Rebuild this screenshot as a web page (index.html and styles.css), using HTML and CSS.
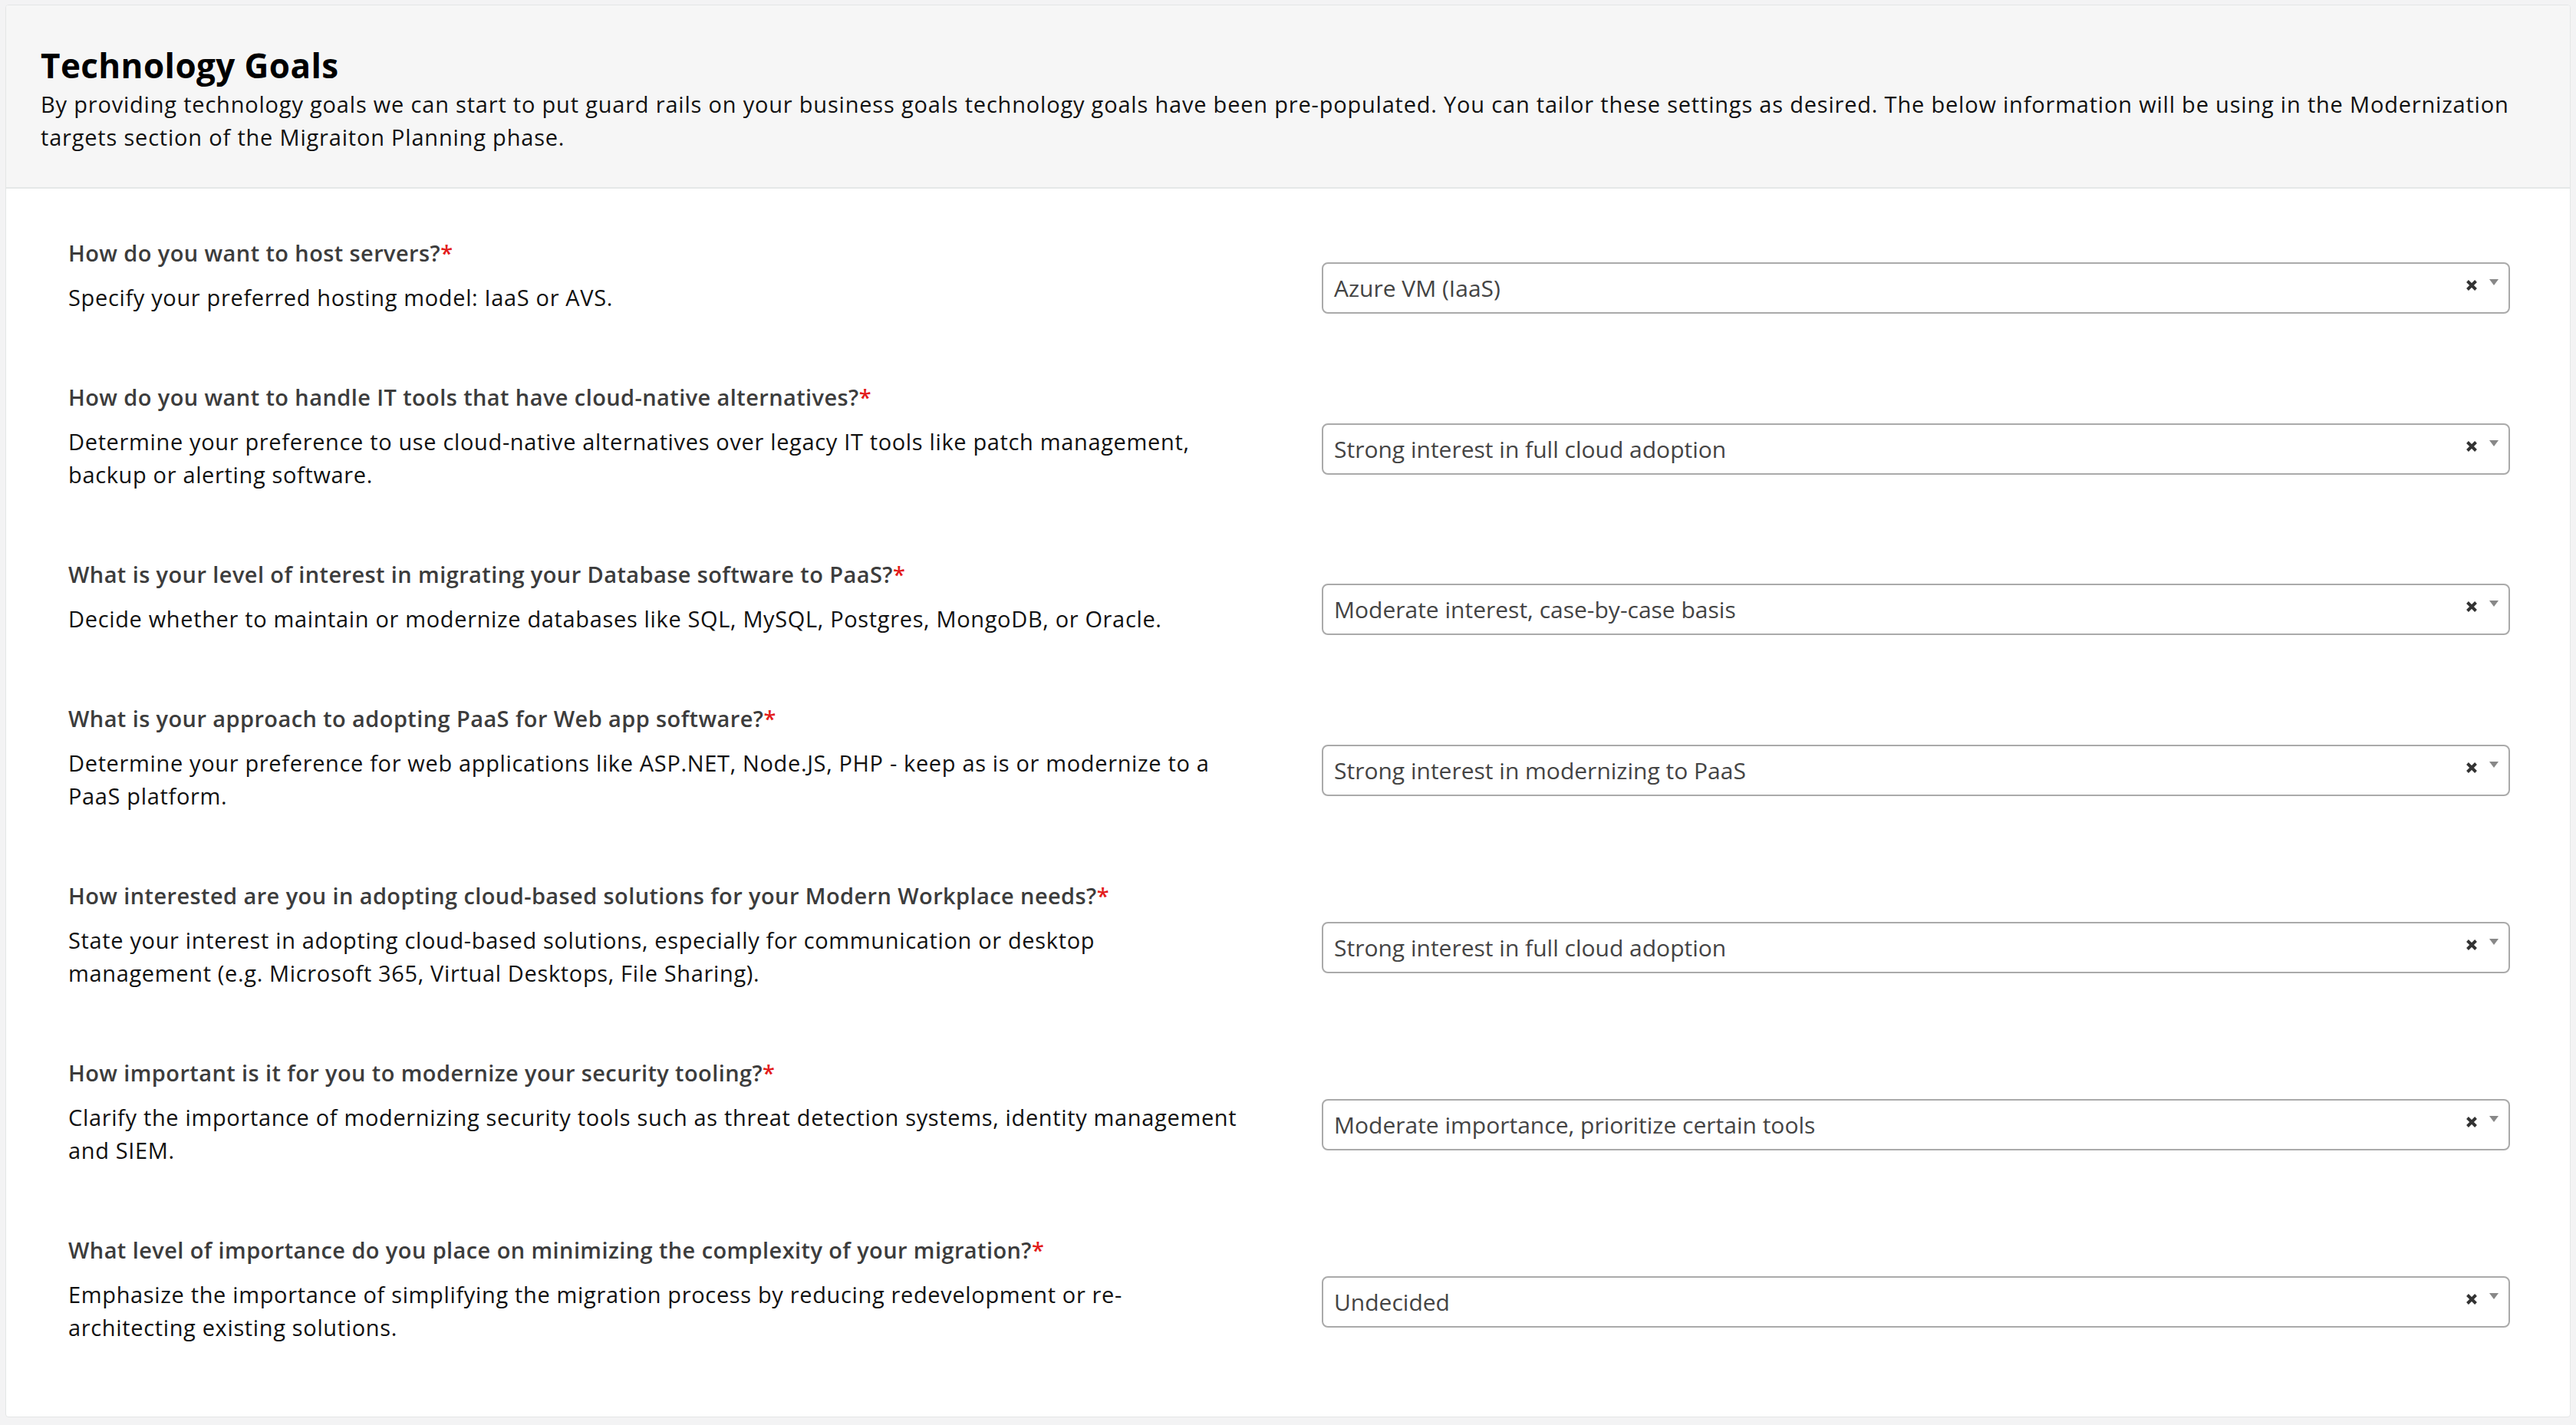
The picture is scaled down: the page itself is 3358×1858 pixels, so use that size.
FILE: index.html
```html
<!DOCTYPE html>
<html lang="en">
<head>
    <meta charset="UTF-8">
    <meta name="viewport" content="width=device-width, initial-scale=1.0">
    <title>Technology Goals</title>
    <link rel="stylesheet" href="styles.css">
</head>
<body>
    <div class="card">
        <!-- Judul dan penjelasan -->
        <div class="card-header">
            <h2>Technology Goals</h2>
            <p>By providing technology goals we can start to put guard rails on your business goals technology goals have been pre-populated. You can tailor these settings as desired. The below information will be using in the Modernization targets section of the Migraiton Planning phase.</p>
        </div>

        <div class="card-body">
            <div class="q-row">
                <div class="q-text">
                    <label>How do you want to host servers?<span class="req">*</span></label>
                    <p>Specify your preferred hosting model: IaaS or AVS.</p>
                </div>
                <div class="select">
                    <span class="value">Azure VM (IaaS)</span>
                    <span class="clear"><svg viewBox="0 0 16 16" width="16" height="16"><path d="M2.5 2.5 L13.5 13.5 M13.5 2.5 L2.5 13.5" stroke="#333" stroke-width="4"/></svg></span>
                    <span class="arrow"></span>
                </div>
            </div>

            <div class="q-row">
                <div class="q-text">
                    <label>How do you want to handle IT tools that have cloud-native alternatives?<span class="req">*</span></label>
                    <p>Determine your preference to use cloud-native alternatives over legacy IT tools like patch management, backup or alerting software.</p>
                </div>
                <div class="select">
                    <span class="value">Strong interest in full cloud adoption</span>
                    <span class="clear"><svg viewBox="0 0 16 16" width="16" height="16"><path d="M2.5 2.5 L13.5 13.5 M13.5 2.5 L2.5 13.5" stroke="#333" stroke-width="4"/></svg></span>
                    <span class="arrow"></span>
                </div>
            </div>

            <div class="q-row">
                <div class="q-text">
                    <label>What is your level of interest in migrating your Database software to PaaS?<span class="req">*</span></label>
                    <p>Decide whether to maintain or modernize databases like SQL, MySQL, Postgres, MongoDB, or Oracle.</p>
                </div>
                <div class="select">
                    <span class="value">Moderate interest, case-by-case basis</span>
                    <span class="clear"><svg viewBox="0 0 16 16" width="16" height="16"><path d="M2.5 2.5 L13.5 13.5 M13.5 2.5 L2.5 13.5" stroke="#333" stroke-width="4"/></svg></span>
                    <span class="arrow"></span>
                </div>
            </div>

            <div class="q-row">
                <div class="q-text">
                    <label>What is your approach to adopting PaaS for Web app software?<span class="req">*</span></label>
                    <p>Determine your preference for web applications like ASP.NET, Node.JS, PHP - keep as is or modernize to a PaaS platform.</p>
                </div>
                <div class="select">
                    <span class="value">Strong interest in modernizing to PaaS</span>
                    <span class="clear"><svg viewBox="0 0 16 16" width="16" height="16"><path d="M2.5 2.5 L13.5 13.5 M13.5 2.5 L2.5 13.5" stroke="#333" stroke-width="4"/></svg></span>
                    <span class="arrow"></span>
                </div>
            </div>

            <div class="q-row">
                <div class="q-text">
                    <label>How interested are you in adopting cloud-based solutions for your Modern Workplace needs?<span class="req">*</span></label>
                    <p>State your interest in adopting cloud-based solutions, especially for communication or desktop<br>management (e.g. Microsoft 365, Virtual Desktops, File Sharing).</p>
                </div>
                <div class="select">
                    <span class="value">Strong interest in full cloud adoption</span>
                    <span class="clear"><svg viewBox="0 0 16 16" width="16" height="16"><path d="M2.5 2.5 L13.5 13.5 M13.5 2.5 L2.5 13.5" stroke="#333" stroke-width="4"/></svg></span>
                    <span class="arrow"></span>
                </div>
            </div>

            <div class="q-row">
                <div class="q-text">
                    <label>How important is it for you to modernize your security tooling?<span class="req">*</span></label>
                    <p>Clarify the importance of modernizing security tools such as threat detection systems, identity management and SIEM.</p>
                </div>
                <div class="select">
                    <span class="value">Moderate importance, prioritize certain tools</span>
                    <span class="clear"><svg viewBox="0 0 16 16" width="16" height="16"><path d="M2.5 2.5 L13.5 13.5 M13.5 2.5 L2.5 13.5" stroke="#333" stroke-width="4"/></svg></span>
                    <span class="arrow"></span>
                </div>
            </div>

            <div class="q-row">
                <div class="q-text">
                    <label>What level of importance do you place on minimizing the complexity of your migration?<span class="req">*</span></label>
                    <p>Emphasize the importance of simplifying the migration process by reducing redevelopment or re-architecting existing solutions.</p>
                </div>
                <div class="select">
                    <span class="value">Undecided</span>
                    <span class="clear"><svg viewBox="0 0 16 16" width="16" height="16"><path d="M2.5 2.5 L13.5 13.5 M13.5 2.5 L2.5 13.5" stroke="#333" stroke-width="4"/></svg></span>
                    <span class="arrow"></span>
                </div>
            </div>
        </div>
    </div>
</body>
</html>
```

FILE: styles.css
```css
/* Dasar halaman */
body {
    font-family: "Open Sans", "Liberation Sans", sans-serif;
    background-color: #f3f3f4;
    margin: 0;
    padding: 6px 7px 12px 7px;
}

/* Kartu utama */
.card {
    background-color: #ffffff;
    border: 1px solid #e4e6e6;
    border-radius: 4px;
    overflow: hidden;
}

.card-header {
    background-color: #f6f6f6;
    border-bottom: 2px solid #e5e8e8;
    padding: 52px 45px 44px 45px;
}

.card-header h2 {
    margin: 0 0 2px 0;
    font-size: 44px;
    line-height: 53px;
    font-weight: 700;
    letter-spacing: 0.4px;
    color: #000000;
}

.card-header p {
    margin: 0;
    font-size: 29px;
    line-height: 43px;
    letter-spacing: 0.8px;
    color: #111111;
}

/* Daftar pertanyaan */
.card-body {
    display: flex;
    flex-direction: column;
    gap: 87px;
    padding: 62px 78px 95px 81px;
}

.q-row {
    display: grid;
    grid-template-columns: 1fr 1549px;
    column-gap: 74px;
    align-items: center;
}

.q-text label {
    display: block;
    font-size: 29px;
    line-height: 43px;
    font-weight: 600;
    letter-spacing: 0.4px;
    color: #3c3c3c;
    margin-bottom: 15px;
}

.req {
    color: #e31b1b;
}

.q-text p {
    margin: 0;
    max-width: 1530px;
    font-size: 29px;
    line-height: 43px;
    letter-spacing: 0.65px;
    color: #111111;
}

/* Dropdown pilihan */
.select {
    position: relative;
    margin-top: 34px;
    height: 67px;
    box-sizing: border-box;
    border: 2px solid #aaaaaa;
    border-radius: 8px;
    display: flex;
    align-items: center;
    padding-left: 14px;
}

.select .value {
    font-size: 30px;
    color: #444444;
    flex: 1;
}

.select .clear {
    position: absolute;
    right: 40px;
    top: 20px;
    line-height: 0;
}

.select .arrow {
    position: absolute;
    right: 13px;
    top: 20px;
    width: 0;
    height: 0;
    border-left: 6px solid transparent;
    border-right: 6px solid transparent;
    border-top: 8px solid #888888;
}
```
